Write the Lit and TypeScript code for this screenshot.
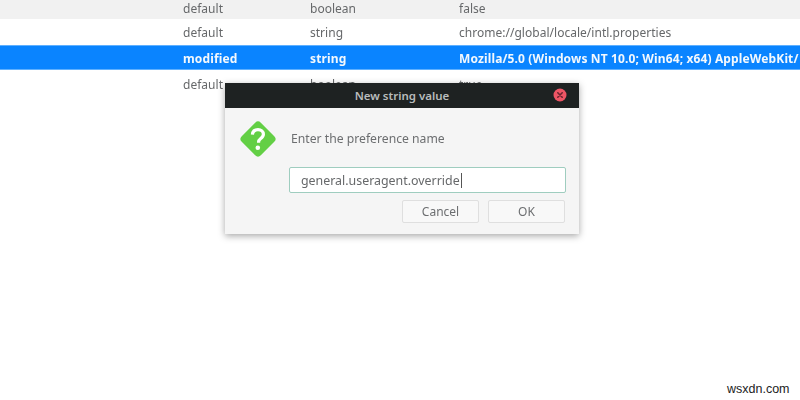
import { LitElement, html, css } from "lit";
import { customElement } from "lit/decorators.js";

@customElement("app-root")
export class AppRoot extends LitElement {
  static styles = css`
    :host {
      display: block;
      position: relative;
      width: 800px;
      height: 400px;
      overflow: hidden;
      background: #fff;
      font-family: "Noto Sans", "Open Sans", sans-serif;
      font-size: 12px;
      color: #66686a;
    }
    .row {
      display: grid;
      grid-template-columns: 127px 149px 1fr;
      padding-left: 183px;
      align-items: center;
      box-sizing: border-box;
      height: 25px;
      white-space: nowrap;
      overflow: hidden;
      letter-spacing: 0.02px;
      filter: blur(0.3px);
    }
    .row.first { height: 19px; background: #f1f1f1; padding-bottom: 5px; }
    .row.second { height: 26px; padding-top: 1px; }
    .row.sel {
      background: #0a84ff;
      color: #f3f8fd;
      font-weight: 700;
      height: 25px;
      padding-top: 1px;
      letter-spacing: 0.13px;
      border-top: 1px solid #5fb0ff;
      border-bottom: 1px solid #5fb0ff;
    }
    .row.last { padding-top: 3px; }
    .dialog {
      position: absolute;
      left: 225px;
      top: 83px;
      width: 354px;
      height: 151px;
      background: #f5f5f5;
      box-shadow: 0 2px 7px rgba(0, 0, 0, 0.35);
      display: flex;
      flex-direction: column;
      filter: blur(0.3px);
    }
    .title {
      height: 25px;
      background: #1e2222;
      color: #b9bcbc;
      font-weight: 600;
      font-size: 11.5px;
      display: flex;
      align-items: center;
      justify-content: center;
      position: relative;
      flex: none;
    }
    .close {
      position: absolute;
      left: 328px;
      top: 5px;
      width: 14px;
      height: 14px;
    }
    .body {
      flex: 1;
      padding: 0 13px 10px 14px;
      display: flex;
      flex-direction: column;
    }
    .prompt {
      display: flex;
      align-items: center;
      gap: 14px;
      height: 59px;
      flex: none;
      padding-top: 2px;
      box-sizing: border-box;
      color: #6c6e70;
      font-size: 12.2px;
    }
    .icon { width: 38px; height: 38px; flex: none; }
    .input {
      margin-left: 50px;
      height: 26px;
      box-sizing: border-box;
      border: 1px solid #9fcdbf;
      border-radius: 2px;
      background: #fff;
      padding-left: 11px;
      display: flex;
      align-items: center;
      font-size: 12.4px;
      color: #66686a;
      flex: none;
    }
    .caret { width: 1px; height: 15px; background: #555; margin-left: 1px; }
    .buttons {
      display: flex;
      justify-content: flex-end;
      gap: 9px;
      margin-top: 7px;
      margin-right: 1px;
    }
    .btn {
      width: 77px;
      height: 23px;
      box-sizing: border-box;
      border: 1px solid #dfdfdf;
      border-radius: 2px;
      background: #f8f8f8;
      color: #6c6e70;
      font-size: 12px;
      display: flex;
      align-items: center;
      justify-content: center;
    }
    .mark {
      position: absolute;
      left: 727px;
      top: 382px;
      font-family: "Liberation Sans", Arial, sans-serif;
      font-size: 12.5px;
      color: #222;
    }
  `;

  render() {
    return html`
      <div class="row first"><span>default</span><span>boolean</span><span>false</span></div>
      <div class="row second"><span>default</span><span>string</span><span>chrome://global/locale/intl.properties</span></div>
      <div class="row sel"><span>modified</span><span>string</span><span>Mozilla/5.0 (Windows NT 10.0; Win64; x64) AppleWebKit/</span></div>
      <div class="row last"><span>default</span><span>boolean</span><span>true</span></div>

      <div class="dialog">
        <div class="title">
          New string value
          <svg class="close" viewBox="0 0 14 14">
            <circle cx="7" cy="7" r="6.5" fill="#ee5565"></circle>
            <path d="M4.8 4.8l4.4 4.4M9.2 4.8l-4.4 4.4" stroke="#6b2530" stroke-width="1.6" stroke-linecap="round"></path>
          </svg>
        </div>
        <div class="body">
          <div class="prompt">
            <svg class="icon" viewBox="0 0 38 38">
              <rect x="5.5" y="5.5" width="27" height="27" rx="4" transform="rotate(45 19 19)" fill="#63cf45"></rect>
              <path d="M13.4 14.600c.3-3.200 2.600-5 5.600-5 3.200 0 5.400 1.900 5.400 4.600 0 2.200-1.200 3.300-2.900 4.500-1.300 1-1.900 1.700-1.900 3.300v.8" fill="none" stroke="#fff" stroke-width="3.200"></path>
              <circle cx="18.800" cy="27.700" r="2.300" fill="#fff"></circle>
            </svg>
            <span>Enter the preference name</span>
          </div>
          <div class="input">general.useragent.override<span class="caret"></span></div>
          <div class="buttons">
            <div class="btn">Cancel</div>
            <div class="btn">OK</div>
          </div>
        </div>
      </div>
      <div class="mark">wsxdn.com</div>
    `;
  }
}
